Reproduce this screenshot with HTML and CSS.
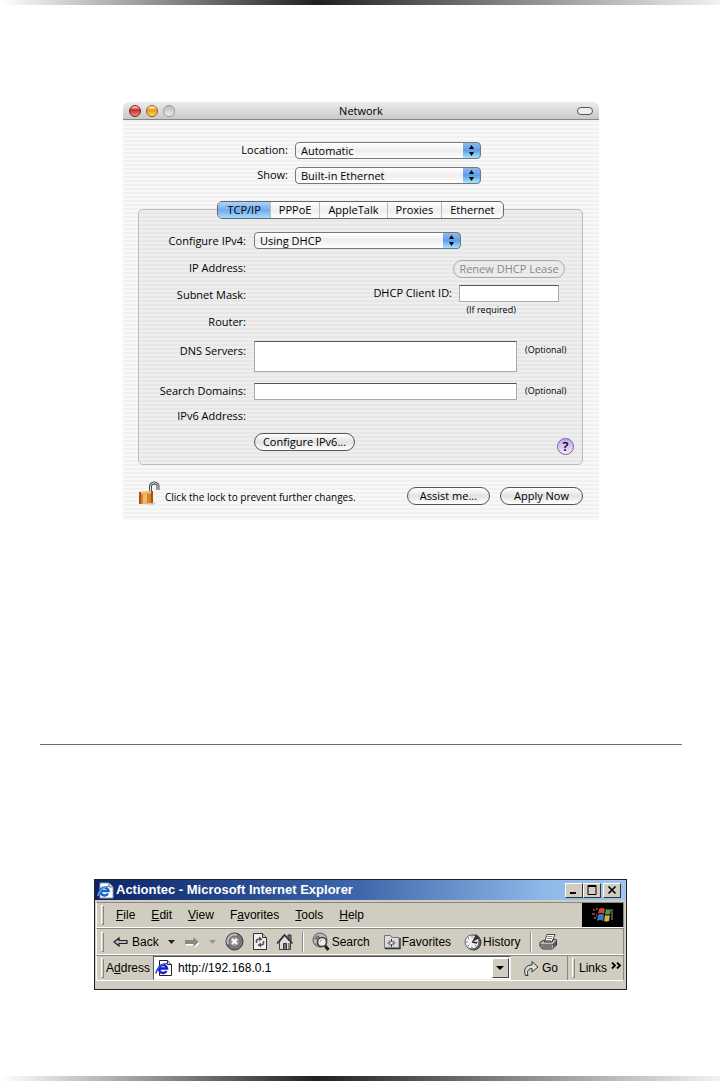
FILE: index.html
```html
<!DOCTYPE html>
<html lang="en">
<head>
  <meta charset="UTF-8">
  <meta name="viewport" content="width=device-width, initial-scale=1.0">
  <title>Network setup</title>
  <link rel="stylesheet" href="styles.css">
</head>
<body>
  <div class="page-bar"></div>

  <main>
    <section class="mac">
      <header class="mac-title">
        <div class="lights">
          <button class="light red" aria-label="Close"></button>
          <button class="light yellow" aria-label="Minimize"></button>
          <button class="light" aria-label="Zoom"></button>
        </div>
        <h1>Network</h1>
        <button class="pill" aria-label="Toggle toolbar"></button>
      </header>

      <form class="mac-body">
        <div class="top-fields">
          <label for="location">Location:</label>
          <select id="location"><option>Automatic</option></select>
          <label for="show">Show:</label>
          <select id="show"><option>Built-in Ethernet</option></select>
        </div>

        <nav class="tabs">
          <button type="button" class="tab active">TCP/IP</button>
          <button type="button" class="tab">PPPoE</button>
          <button type="button" class="tab">AppleTalk</button>
          <button type="button" class="tab">Proxies</button>
          <button type="button" class="tab">Ethernet</button>
        </nav>

        <div class="panel">
          <label class="name" for="ipv4">Configure IPv4:</label>
          <select class="ipv4" id="ipv4"><option>Using DHCP</option></select>
          <span class="name">IP Address:</span>
          <span class="name">Subnet Mask:</span>
          <span class="name">Router:</span>
          <div class="dhcp">
            <button type="button" class="btn renew" disabled>Renew DHCP Lease</button>
            <div class="client">
              <label for="client">DHCP Client ID:</label>
              <input type="text" id="client">
            </div>
            <small>(If required)</small>
          </div>
          <label class="name dns-name" for="dns">DNS Servers:</label>
          <textarea id="dns"></textarea>
          <small class="dns-name">(Optional)</small>
          <label class="name" for="domains">Search Domains:</label>
          <input type="text" id="domains">
          <small>(Optional)</small>
          <span class="name">IPv6 Address:</span>
          <button type="button" class="btn ipv6">Configure IPv6...</button>
          <button type="button" class="help" aria-label="Help">?</button>
        </div>

        <footer class="mac-footer">
          <svg class="lock" width="22" height="25" viewBox="0 0 22 25">
            <path d="M12.500 12V5.500a4 4 0 0 1 7.500 0V10" fill="none" stroke="#555" stroke-width="3"/>
            <path d="M12.500 12V5.500a4 4 0 0 1 7.500 0V10" fill="none" stroke="#ddd" stroke-width="1"/>
            <path d="M1 12l14-1v12L2 24z" fill="#d98324"/>
            <path d="M1 12l14-1v2L1 14z" fill="#f6c27a"/>
            <path d="M5 14l4-.5V23l-4 .5z" fill="#f3b566"/>
            <path d="M1 12l2 0v12l-2 0zM13 11h2v12h-2z" fill="#9c5717"/>
            <path d="M2 24l15-.8 3-1.200-5 2.500z" fill="#aaa"/>
          </svg>
          <span class="hint">Click the lock to prevent further changes.</span>
          <button type="button" class="btn">Assist me...</button>
          <button type="button" class="btn">Apply Now</button>
        </footer>
      </form>
    </section>

    <hr>

    <section class="ie">
      <header class="ie-title">
        <svg width="17" height="17" viewBox="0 0 17 17">
          <path d="M3 1h9l4 4v11H3z" fill="#fff" stroke="#999"/>
          <path d="M12 1v4h4" fill="#ddd" stroke="#777"/>
          <path d="M11 11.500A4 4 0 1 1 11.500 9H4" fill="none" stroke="#1b63c8" stroke-width="2.500"/>
          <path d="M1 14C1 10 7 4 13 4" fill="none" stroke="#4aa3ee" stroke-width="1.500"/>
        </svg>
        <h2>Actiontec - Microsoft Internet Explorer</h2>
        <div class="win-buttons">
          <button aria-label="Minimize"><svg width="10" height="10"><path d="M1 8h6" stroke="#000" stroke-width="2"/></svg></button>
          <button aria-label="Maximize"><svg width="10" height="10"><path d="M1 .5h8v9H1zM1 1.500h8" fill="none" stroke="#000"/></svg></button>
          <button class="close" aria-label="Close"><svg width="10" height="10"><path d="M1.500 1.500l7 7M8.500 1.500l-7 7" stroke="#000" stroke-width="1.600"/></svg></button>
        </div>
      </header>

      <nav class="bar menu">
        <i class="grip"></i>
        <button><u>F</u>ile</button>
        <button><u>E</u>dit</button>
        <button><u>V</u>iew</button>
        <button>F<u>a</u>vorites</button>
        <button><u>T</u>ools</button>
        <button><u>H</u>elp</button>
        <div class="logo">
          <svg width="24" height="18" viewBox="0 0 24 18">
            <path d="M2 3h2v2H2zM1 7h3v2H1zM3 11h2v2H3zM5 2h2v2H5zM5 8h1v3H5z" fill="#8b3a30"/>
            <path d="M8 3q3-2 6 0l-1 5q-3-2-6 0z" fill="#c64c30"/>
            <path d="M15 3q3 1 5 0l-1 5q-3 1-5 0z" fill="#4e9b58"/>
            <path d="M7 9q3-2 6 0l-1 6q-3-2-6 0z" fill="#3f79c4"/>
            <path d="M14 9q3 1 5 0l-1 6q-3 1-5 0z" fill="#d3b441"/>
            <path d="M21 3v11" stroke="#a9a08f" stroke-width="1"/>
          </svg>
        </div>
      </nav>

      <div class="bar tools">
        <i class="grip"></i>
        <button class="back">
          <svg width="16" height="12" viewBox="0 0 16 12"><path d="M1 6l5-4v2.500h8v3H6V10z" fill="#bbb" stroke="#222" stroke-width="1.200"/></svg>
          Back
        </button>
        <button class="drop" aria-label="Back history"><svg width="7" height="4"><path d="M0 0h7L3.500 4z" fill="#222"/></svg></button>
        <button class="forward" aria-label="Forward"><svg width="16" height="12" viewBox="0 0 16 12"><path d="M15.500 7.500l-5 4.500V9.500H2v-3h8V3z" fill="#fff"/><path d="M14.500 6l-5-5v3H1v4h8.500v3z" fill="#888"/></svg></button>
        <button class="drop" aria-label="Forward history"><svg width="7" height="4"><path d="M0 0h7L3.500 4z" fill="#999"/></svg></button>
        <button class="stop" aria-label="Stop">
          <svg width="19" height="19" viewBox="0 0 19 19"><circle cx="9.500" cy="9.500" r="8.500" fill="#777" stroke="#333"/><path d="M3 12A7 7 0 0 1 12 3" fill="none" stroke="#bbb" stroke-width="2"/><circle cx="9.500" cy="9.500" r="4.500" fill="#999"/><path d="M7 7l5 5M12 7l-5 5" stroke="#fff" stroke-width="2"/></svg>
        </button>
        <button class="refresh" aria-label="Refresh">
          <svg width="16" height="19" viewBox="0 0 16 19"><path d="M1.500 1.500h9l4 4v12h-13z" fill="#eee" stroke="#333"/><path d="M10.500 1.500v4h4" fill="#bbb" stroke="#333"/><path d="M4.500 11V9q0-2 3-2M11.500 9v2q0 2-3 2" fill="none" stroke="#555" stroke-width="1.600"/><path d="M7 4.500l3.500 2.500L7 9.500zM9 10.500L5.500 13 9 15.500z" fill="#555"/></svg>
        </button>
        <button class="home" aria-label="Home">
          <svg width="18" height="18" viewBox="0 0 18 18"><path d="M12 2h3v6h-3z" fill="#777" stroke="#333"/><path d="M3.500 9l5-6.500 6 6.500v7.500h-11z" fill="#ddd" stroke="#444"/><path d="M1 10.500L8.500 2l8 8.500" fill="none" stroke="#333" stroke-width="1.600"/><path d="M7.500 10.500h3v6h-3z" fill="#777" stroke="#333"/><path d="M13 10v6" stroke="#888" stroke-width="2"/></svg>
        </button>
        <i class="rule"></i>
        <button class="search">
          <svg width="19" height="19" viewBox="0 0 19 19"><circle cx="8" cy="8" r="7" fill="#bbb" stroke="#555"/><path d="M2 6l4-3 2 2-4 3zM3 11l3 1-1 2z" fill="#777"/><path d="M12.500 13l4 5" stroke="#222" stroke-width="3"/><circle cx="10" cy="10" r="4.500" fill="#eee" stroke="#444" stroke-width="1.600"/><path d="M8 10q0-2 2-2" fill="none" stroke="#999"/></svg>
          Search
        </button>
        <button class="favs">
          <svg width="18" height="17" viewBox="0 0 18 17"><path d="M1.500 15V2.500h6l1 2h7.500V15z" fill="#ddd" stroke="#777"/><path d="M2 15.500h15V5" fill="none" stroke="#333" stroke-width="1.400"/><path d="M8.500 6v8M4.500 10h8M6 7.500l5 5M11 7.500l-5 5" stroke="#333"/><circle cx="8.500" cy="10" r="1.200" fill="#fff"/></svg>
          Favorites
        </button>
        <button class="history">
          <svg width="18" height="18" viewBox="0 0 18 18"><circle cx="9.500" cy="9.500" r="7.500" fill="#555" stroke="#333"/><circle cx="8" cy="9" r="7" fill="#eee" stroke="#666"/><path d="M8 3.500v1M8 14v1M2.500 9h1M12.500 9h1M4 5l.7.7M4 13l.7-.7M12 13l-.7-.7" stroke="#333"/><path d="M8 9l4-8 4 4z" fill="#333"/><path d="M8 9l5 1" stroke="#222" stroke-width="1.400"/></svg>
          History
        </button>
        <i class="rule"></i>
        <button class="print" aria-label="Print">
          <svg width="19" height="18" viewBox="0 0 19 18"><path d="M5.500 9L8 1.500h8L13 9z" fill="#fff" stroke="#444"/><path d="M8.500 3.500h5M8 5.500h5M7 7.500h5" stroke="#888"/><path d="M1 9.500l3-2h2l-.5 1.500H13l1.500-3 3 1v5l-4 4H4l-3-2.500z" fill="#bbb" stroke="#333"/><path d="M1 12h12.500l4-4M3 14h10" fill="none" stroke="#333"/><path d="M14 11.500l3-3v3.500l-3 3z" fill="#555"/></svg>
        </button>
      </div>

      <div class="bar address">
        <i class="grip"></i>
        <label for="url">A<u>d</u>dress</label>
        <div class="combo">
          <svg width="18" height="18" viewBox="0 0 18 18">
            <path d="M4.500 1.500h8l4 4v11h-12z" fill="#fff" stroke="#222"/>
            <path d="M12.500 1.500v4h4" fill="#ccc" stroke="#222"/>
            <path d="M11.500 12A4 4 0 1 1 12 9.500H5" fill="none" stroke="#1a1ad0" stroke-width="2.500"/>
            <path d="M1 14.500C1 10 7 4 13 4.500" fill="none" stroke="#2a4fe0" stroke-width="1.500"/>
          </svg>
          <input type="text" id="url" value="http://192.168.0.1">
          <button class="combo-drop" aria-label="Show addresses"><svg width="8" height="4"><path d="M0 0h8L4 4z" fill="#000"/></svg></button>
        </div>
        <button class="go">
          <svg width="16" height="18" viewBox="0 0 16 18"><path d="M2.500 16.500C0 10 3 6 9 6V2.500l6 5.500-6 5V9.500C5.500 9.500 3.500 12 5 16.500z" fill="#ddd" stroke="#333"/></svg>
          Go
        </button>
        <div class="links">
          <i class="grip"></i>
          <span>Links</span>
          <svg width="11" height="7"><path d="M1 .5l3 3-3 3M6 .5l3 3-3 3" fill="none" stroke="#000" stroke-width="1.800"/></svg>
        </div>
      </div>
    </section>
  </main>

  <div class="page-bar"></div>
</body>
</html>
```
FILE: styles.css
```css
* {
  margin: 0;
  padding: 0;
  box-sizing: border-box;
}

body {
  min-height: 100vh;
  display: flex;
  flex-direction: column;
  background: #fff;
  color: #000;
  font-family: "Open Sans", sans-serif;
}

main {
  flex: 1;
}

.page-bar {
  height: 5px;
  background: linear-gradient(to right, #fff 0%, #231f20 44%, #8c8889 72%, #f2f2f2 100%);
}

button,
input,
select,
textarea {
  font: inherit;
  color: inherit;
  border: none;
  border-radius: 0;
  background: none;
}

svg {
  display: block;
  flex: none;
}

hr {
  margin: 224px 38px 0 40px;
  border: none;
  border-top: 1px solid #6d6a6b;
}

/* Mac network window */

.mac {
  margin: 97px 121px 0 123px;
  border-radius: 6px 6px 0 0;
  overflow: hidden;
  font-size: 11px;
  line-height: 16px;
  background: repeating-linear-gradient(#f8f8f8 0, #f8f8f8 2px, #f1f1f1 2px, #f1f1f1 4px);
}

.mac-title {
  height: 18px;
  padding: 0 6px;
  display: grid;
  grid-template-columns: 1fr auto 1fr;
  align-items: center;
  background: linear-gradient(#ececec, #c9c9c9);
  border-bottom: 1px solid #888;
}

.mac-title h1 {
  font-size: 11px;
  font-weight: normal;
}

.lights {
  display: flex;
  gap: 5px;
}

.light {
  width: 12px;
  height: 12px;
  border: 1px solid #999;
  border-radius: 50%;
  background: linear-gradient(#bbb, #eee);
}

.light.red {
  border-color: #7c2424;
  background: linear-gradient(#fbb 10%, #c22c2c 40%, #f58a80);
}

.light.yellow {
  border-color: #94601a;
  background: linear-gradient(#fff0c0 10%, #e8941c 40%, #fde35a);
}

.pill {
  justify-self: end;
  width: 16px;
  height: 8px;
  border: 1px solid #555;
  border-radius: 4px;
  background: #eee;
}

.mac-body {
  padding: 22px 16px 15px 15px;
}

.top-fields {
  display: grid;
  grid-template-columns: 150px 186px;
  gap: 8px 7px;
  text-align: right;
}

.mac select {
  height: 17px;
  padding-left: 5px;
  appearance: none;
  border: 1px solid #777;
  border-radius: 4px;
  background:
    url("data:image/svg+xml,%3Csvg xmlns='http://www.w3.org/2000/svg' width='17' height='15'%3E%3Cpath d='M8.500 2l2.500 4H6zM8.500 13L6 9h5z'/%3E%3C/svg%3E") right center no-repeat,
    linear-gradient(#8fb8ec, #5c9ee8 50%, #a5e4ff) right / 17px 100% no-repeat,
    linear-gradient(#fff, #eee 50%, #fff);
}

.tabs {
  position: relative;
  width: max-content;
  margin: 17px auto 0;
  display: flex;
  border: 1px solid #666;
  border-radius: 5px;
  overflow: hidden;
  background: linear-gradient(#fff, #eee 50%, #fff);
}

.tab {
  height: 16px;
  padding: 0 8px;
  line-height: 16px;
  border-left: 1px solid #bbb;
}

.tab.active {
  padding: 0 9px;
  border-left: none;
  background: linear-gradient(#b5d2f6, #6fabee 50%, #a5dcff);
}

.panel {
  margin-top: -10px;
  padding: 17px 14px 9px 0;
  display: grid;
  grid-template-columns: 107px 1fr 43px;
  grid-template-rows: 27px 27px 27px 27px 43px 26px 24px 27px;
  column-gap: 8px;
  align-items: center;
  border: 1px solid #bbb;
  border-radius: 5px;
  background: rgba(0, 0, 0, 0.04);
}

.name {
  grid-column: 1;
  text-align: right;
  white-space: nowrap;
}

.panel .ipv4 {
  grid-column: 2;
  width: 207px;
}

.btn {
  height: 18px;
  padding: 0 12px;
  line-height: 16px;
  white-space: nowrap;
  border: 1px solid #555;
  border-radius: 9px;
  background: linear-gradient(#fff, #e2e2e2 50%, #fff);
}

.btn:disabled {
  color: #888;
  border-color: #aaa;
  background: none;
}

.dhcp {
  grid-column: 2 / 4;
  grid-row: 2 / 5;
  align-self: start;
  justify-self: end;
  padding: 6px 3px 0 0;
  display: flex;
  flex-direction: column;
}

.renew {
  align-self: flex-end;
  width: 112px;
  padding: 0;
}

.client {
  margin: 7px 6px 1px 0;
  display: flex;
  gap: 7px;
}

.mac input,
.mac textarea {
  height: 17px;
  padding: 0 3px;
  background: #fff;
  border: 1px solid #aaa;
  border-top-color: #555;
}

.client input {
  width: 100px;
}

.mac small {
  font-size: 9px;
  line-height: 14px;
}

.dhcp small {
  padding-left: 93px;
}

.mac textarea {
  height: 31px;
  resize: none;
}

.panel .dns-name {
  align-self: start;
  padding-top: 8px;
}

.ipv6 {
  grid-column: 2;
  grid-row: 8;
  justify-self: start;
  width: 101px;
  padding: 0;
}

.help {
  grid-column: 3;
  grid-row: 8;
  justify-self: end;
  align-self: end;
  width: 17px;
  height: 17px;
  margin-right: -6px;
  border: 1px solid #75658f;
  border-radius: 50%;
  font-size: 13px;
  font-weight: 600;
  line-height: 15px;
  background: linear-gradient(#c2a5ec, #d9c5f8 50%, #f7e8ff);
}

.mac-footer {
  margin-top: 15px;
  display: flex;
  align-items: flex-end;
  gap: 10px;
}

.hint {
  flex: 1;
  margin-left: -5px;
  font-size: 10px;
  white-space: nowrap;
}

.mac-footer .btn {
  width: 83px;
  padding: 0;
}

/* Internet Explorer window */

.ie {
  margin: 134px 93px 0 94px;
  padding: 0 2px 8px 1px;
  border: 1px solid #222;
  font-family: "Liberation Sans", sans-serif;
  font-size: 12px;
  line-height: 16px;
  background: #d0cdc0;
}

.ie-title {
  height: 20px;
  margin: 0 -2px 2px -1px;
  padding: 0 5px 0 2px;
  display: flex;
  align-items: center;
  gap: 2px;
  color: #fff;
  background: linear-gradient(to right, #0b2569, #3f68ac 50%, #8fb9e8 85%, #a0c6f0);
}

.ie-title h2 {
  flex: 1;
  font-size: 13px;
  white-space: nowrap;
}

.win-buttons {
  display: flex;
}

.win-buttons button {
  width: 18px;
  height: 15px;
  display: grid;
  place-items: center;
  background: #d0cdc0;
  border: 1px solid;
  border-color: #fff #333 #333 #fff;
}

.win-buttons .close {
  margin-left: 2px;
}

.bar {
  display: flex;
  align-items: center;
  padding-left: 4px;
  border: 1px solid;
  border-color: #888 #888 #fff #fff;
  white-space: nowrap;
}

.bar button {
  display: flex;
  align-items: center;
  gap: 3px;
}

.grip {
  width: 3px;
  height: 20px;
  border: 1px solid;
  border-color: #fff #888 #888 #fff;
}

.rule {
  width: 2px;
  height: 20px;
  border-left: 1px solid #888;
  border-right: 1px solid #fff;
}

.menu {
  height: 26px;
  gap: 16px;
}

.menu .grip {
  margin-right: -4px;
}

.menu button {
  display: block;
}

.logo {
  align-self: stretch;
  width: 41px;
  margin-left: auto;
  display: grid;
  place-items: center;
  background: #000;
}

.tools {
  height: 27px;
}

.back {
  margin-left: 9px;
}

.drop {
  margin: 0 9px;
}

.refresh,
.home,
.tools .rule,
.search {
  margin-left: 8px;
}

.bar .search,
.bar .favs,
.bar .history {
  gap: 1px;
}

.favs,
.history {
  margin-left: 13px;
}

.tools .history + .rule {
  margin: 0 7px 0 10px;
}

.address {
  height: 26px;
}

.address label {
  margin: 0 3px 0 2px;
}

.combo {
  flex: 1;
  height: 24px;
  padding: 1px;
  display: flex;
  align-items: center;
  gap: 5px;
  background: #fff;
  border: 1px solid;
  border-color: #555 #eee #eee #555;
}

.combo input {
  flex: 1;
  min-width: 0;
}

.combo .combo-drop {
  width: 17px;
  height: 20px;
  justify-content: center;
  background: #d0cdc0;
  border: 1px solid;
  border-color: #fff #444 #444 #fff;
}

.go {
  margin: 0 9px 0 12px;
}

.links {
  display: flex;
  align-items: center;
  gap: 4px;
  height: 24px;
  padding: 0 1px 0 4px;
  border-left: 1px solid #888;
}

.links svg {
  align-self: flex-start;
  margin-top: 6px;
}
```
